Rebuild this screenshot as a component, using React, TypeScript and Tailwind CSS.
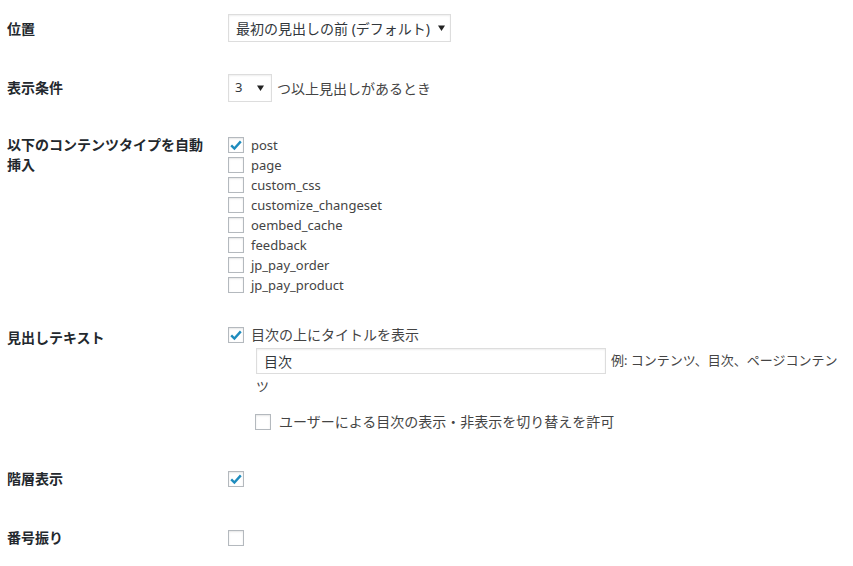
import React from 'react';

const font = 'font-["Segoe_UI","Noto_Sans","Noto_Sans_CJK_JP",sans-serif]';

const Arrow: React.FC = () => (
  <svg width="7" height="6" viewBox="0 0 7 6" className="shrink-0">
    <polygon points="0,0.5 7,0.5 3.5,6" fill="#222" />
  </svg>
);

const Checkbox: React.FC<{ checked?: boolean }> = ({ checked }) => (
  <span className="w-4 h-4 shrink-0 border border-[#b4b9be] bg-white shadow-[inset_0_1px_2px_rgba(0,0,0,0.1)] flex items-center justify-center">
    {checked && (
      <svg width="14" height="14" viewBox="0 0 14 14">
        <path d="M2.2 7.4 L5.4 10.6 L11.8 3.4" fill="none" stroke="#1e8cbe" strokeWidth="2.4" strokeLinejoin="miter" />
      </svg>
    )}
  </span>
);

const CheckRow: React.FC<{ checked?: boolean; label: string; gap?: string; small?: boolean }> = ({ checked, label, gap = 'gap-[7px]', small }) => (
  <label className={`h-5 flex items-center ${gap}`}>
    <Checkbox checked={checked} />
    <span className={`leading-5 whitespace-nowrap ${small ? 'text-[13px]' : ''}`}>{label}</span>
  </label>
);

const Label: React.FC<{ children: React.ReactNode; className?: string }> = ({ children, className = '' }) => (
  <div className={`w-[200px] mr-[21px] shrink-0 font-bold text-[#23282d] leading-5 ${className}`}>{children}</div>
);

const postTypes = [
  { name: 'post', checked: true },
  { name: 'page' },
  { name: 'custom_css' },
  { name: 'customize_changeset' },
  { name: 'oembed_cache' },
  { name: 'feedback' },
  { name: 'jp_pay_order' },
  { name: 'jp_pay_product' },
];

export default function App() {
  return (
    <div className={`w-[853px] h-[566px] bg-white pl-[7px] pt-[14px] text-[14px] text-[#444] ${font} overflow-hidden`}>
      {/* 位置 */}
      <div className="flex items-start">
        <Label className="pt-[5px]">位置</Label>
        <div className="w-[223px] h-[28px] border border-[#ddd] shadow-[inset_0_1px_2px_rgba(0,0,0,0.07)] flex items-center justify-between pl-[7px] pr-[5px]">
          <span className="whitespace-nowrap text-[#32373c]">最初の見出しの前 (デフォルト)</span>
          <Arrow />
        </div>
      </div>

      {/* 表示条件 */}
      <div className="flex items-start mt-[32px]">
        <Label className="pt-[4px]">表示条件</Label>
        <div className="flex items-center gap-[5px]">
          <div className="w-[44px] h-[28px] border border-[#ddd] shadow-[inset_0_1px_2px_rgba(0,0,0,0.07)] flex items-center justify-between pl-[6px] pr-[7px]">
            <span className="text-[#32373c] text-[13px]">3</span>
            <Arrow />
          </div>
          <span className="whitespace-nowrap">つ以上見出しがあるとき</span>
        </div>
      </div>

      {/* 自動挿入 */}
      <div className="flex items-start mt-[33px]">
        <Label>以下のコンテンツタイプを自動挿入</Label>
        <div className="flex flex-col">
          {postTypes.map((p) => (
            <CheckRow key={p.name} checked={p.checked} label={p.name} small />
          ))}
        </div>
      </div>

      {/* 見出しテキスト */}
      <div className="flex items-start mt-[30px]">
        <Label className="pt-[3px]">見出しテキスト</Label>
        <div className="flex flex-col">
          <CheckRow checked label="目次の上にタイトルを表示" />
          <div className="ml-[28px] mt-[3px] flex items-center gap-[5px]">
            <div className="w-[350px] h-[26px] border border-[#ddd] shadow-[inset_0_1px_2px_rgba(0,0,0,0.07)] flex items-center px-[7px] text-[#32373c]">
              目次
            </div>
            <span className="whitespace-nowrap text-[13px]">例: コンテンツ、目次、ページコンテン</span>
          </div>
          <div className="ml-[28px] mt-[2px] h-5 leading-5 text-[13px]">ツ</div>
          <div className="ml-[27px] mt-[16px]">
            <CheckRow label="ユーザーによる目次の表示・非表示を切り替えを許可" gap="gap-[8px]" />
          </div>
        </div>
      </div>

      {/* 階層表示 */}
      <div className="flex items-start mt-[37px]">
        <Label>階層表示</Label>
        <div className="h-5 flex items-center">
          <Checkbox checked />
        </div>
      </div>

      {/* 番号振り */}
      <div className="flex items-start mt-[39px]">
        <Label>番号振り</Label>
        <div className="h-5 flex items-center">
          <Checkbox />
        </div>
      </div>
    </div>
  );
}
